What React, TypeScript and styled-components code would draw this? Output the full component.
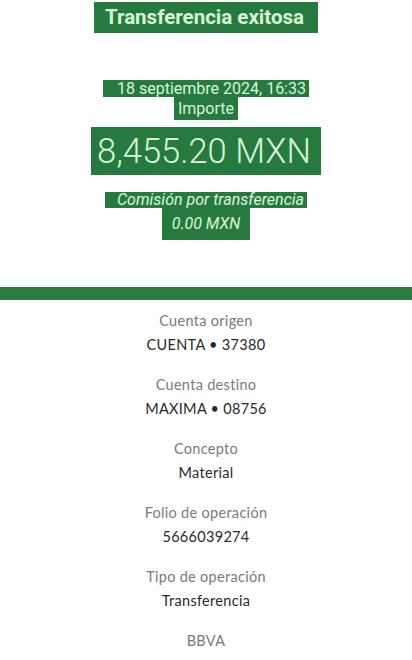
import styled, { createGlobalStyle } from 'styled-components';

const GlobalStyle = createGlobalStyle`
    body {
        margin: 0;
        background: #ffffff;
        font-family: Roboto, "Liberation Sans", sans-serif;
    }
`

const details = [
    { label: 'Cuenta origen', value: 'CUENTA • 37380' },
    { label: 'Cuenta destino', value: 'MAXIMA • 08756' },
    { label: 'Concepto', value: 'Material' },
    { label: 'Folio de operación', value: '5666039274' },
    { label: 'Tipo de operación', value: 'Transferencia' },
    { label: 'BBVA', value: '' },
];

function App() {
    return (
        <>
            <GlobalStyle />
            <Page>
                <Hero>
                    <Title>Transferencia exitosa</Title>
                    <DateText>18 septiembre 2024, 16:33</DateText>
                    <Small>Importe</Small>
                    <Amount>8,455.20 MXN</Amount>
                    <Fee>Comisión por transferencia</Fee>
                    <FeeValue>0.00 MXN</FeeValue>
                </Hero>
                <GreenBar />
                <DetailList>
                    {details.map((d) => (
                        <Detail key={d.label}>
                            <Label>{d.label}</Label>
                            {d.value && <Value>{d.value}</Value>}
                        </Detail>
                    ))}
                </DetailList>
            </Page>
        </>
    )
}

const Page = styled.div`
    display: flex;
    flex-direction: column;
    width: 412px;
    height: 660px;
    overflow: hidden;
`

const Hero = styled.div`
    display: flex;
    flex-direction: column;
    align-items: center;
    flex-shrink: 0;
    padding-top: 2px;
    height: 287px;
    box-sizing: border-box;
`

const Mark = styled.span`
    display: inline-block;
    background: #267a40;
    color: #d8f6d6;
    text-align: center;
    white-space: nowrap;
`

const Title = styled(Mark)`
    font-size: 20.5px;
    font-weight: 700;
    line-height: 31px;
    padding: 0 14px 0 11px;
`

const DateText = styled(Mark)`
    margin-top: 47px;
    font-size: 16px;
    line-height: 17px;
    padding: 0 3px 0 14px;
`

const Small = styled(Mark)`
    font-size: 16px;
    line-height: 23px;
    padding: 0 4px;
`

const Amount = styled(Mark)`
    margin-top: 7px;
    font-size: 34.5px;
    font-weight: 300;
    line-height: 48px;
    padding: 0 10px 0 6px;
`

const Fee = styled(Mark)`
    margin-top: 17px;
    font-size: 16px;
    font-style: italic;
    line-height: 16px;
    padding: 0 3px 0 12px;
`

const FeeValue = styled(Mark)`
    font-size: 16px;
    font-style: italic;
    line-height: 32px;
    padding: 0 10px;
`

const GreenBar = styled.div`
    flex-shrink: 0;
    height: 13px;
    background: #2a7c42;
`

const DetailList = styled.div`
    display: flex;
    flex-direction: column;
    align-items: center;
    padding-top: 10px;
    font-family: Lato, "Open Sans", sans-serif;
    font-size: 14.5px;
`

const Detail = styled.div`
    display: flex;
    flex-direction: column;
    align-items: center;
    flex-shrink: 0;
    height: 64px;
`

const Label = styled.div`
    color: #7a7a7a;
    line-height: 22px;
    letter-spacing: 0.3px;
`

const Value = styled.div`
    color: #2a2a2a;
    line-height: 26px;
    letter-spacing: 0.3px;
`

export default App;
